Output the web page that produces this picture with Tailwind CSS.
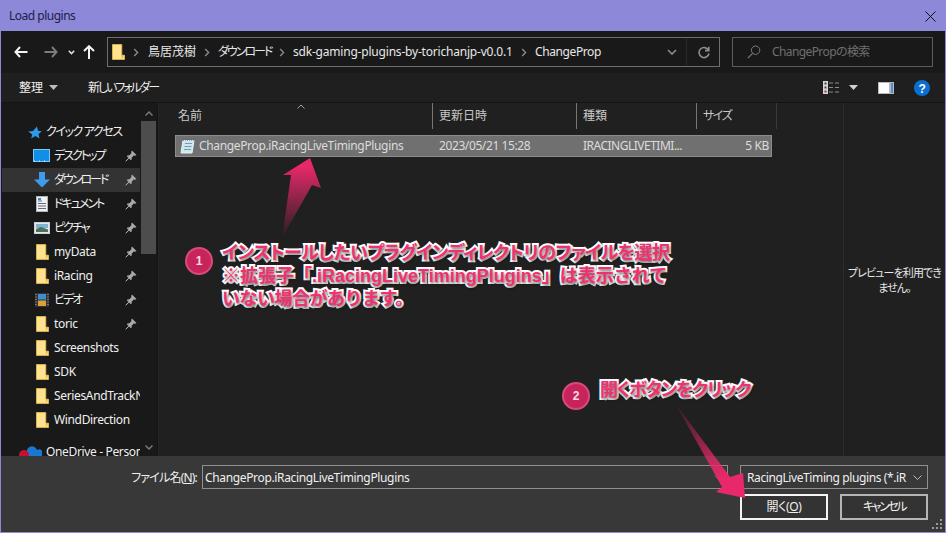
<!DOCTYPE html>
<html lang="ja">
<head>
  <meta charset="UTF-8" />
  <title>Load plugins</title>
  <script src="https://cdn.jsdelivr.net/npm/@tailwindcss/browser@4"></script>
</head>
<body class="bg-[#8e88d8]">
  <!-- shared icons -->
  <svg class="hidden">
    <symbol id="folder" viewBox="0 0 14 17">
      <path d="M0.5 0.5H10.5V12H13.5V16.5H0.5Z" fill="#ffe391" stroke="#e3b94f"/>
      <path d="M10.5 12H13.5L10.5 16.5Z" fill="#e8bf57"/>
    </symbol>
    <symbol id="pin" viewBox="0 0 12 12">
      <path d="M7 0.5L11.5 5L10 5.8L8.8 5.6L6.8 7.6L6.6 9.8L5.6 10L2 6.4L2.2 5.4L4.4 5.2L6.4 3.2L6.2 2Z" fill="#a9a9a9"/>
      <path d="M3.6 8.2L0.8 11.2L3.8 8.4Z" stroke="#a9a9a9" fill="none"/>
    </symbol>
    <symbol id="crumb" viewBox="0 0 6 9">
      <path d="M1.2 1L4.6 4.5L1.2 8" fill="none" stroke="#8a8a8a" stroke-width="1.4"/>
    </symbol>
  </svg>

  <div class="relative w-[946px] h-[533px] overflow-hidden flex flex-col px-px pb-px bg-[#8e88d8] font-['Noto_Sans','Noto_Sans_CJK_JP',sans-serif] text-xs tracking-[-0.35px] text-[#f0f0f0] [font-feature-settings:'palt']">

    <!-- title bar -->
    <div class="h-[30px] mt-px shrink-0 flex items-center justify-between pl-[8px] pr-[9px] text-[#20204a]">
      <span class="text-xs tracking-[-0.5px]">Load plugins</span>
      <svg width="11" height="11" viewBox="0 0 11 11"><path d="M0.5 0.5L10.5 10.5M10.5 0.5L0.5 10.5" stroke="#111" stroke-width="1"/></svg>
    </div>

    <!-- nav bar -->
    <div class="h-[42px] shrink-0 bg-[#191919] flex items-center">
      <div class="w-[106px] shrink-0 flex items-center">
        <svg class="ml-[13px]" width="14" height="12" viewBox="0 0 14 12"><path d="M6 1L1.5 6L6 11M1.5 6H13.5" fill="none" stroke="#f4f4f4" stroke-width="2"/></svg>
        <svg class="ml-[16px]" width="14" height="12" viewBox="0 0 14 12"><path d="M8 1L12.5 6L8 11M12.5 6H0.5" fill="none" stroke="#7c7c7c" stroke-width="2"/></svg>
        <svg class="ml-[10px]" width="7" height="5" viewBox="0 0 7 5"><path d="M0.8 0.8L3.5 3.6L6.2 0.8" fill="none" stroke="#e0e0e0" stroke-width="1.5"/></svg>
        <svg class="ml-[8px]" width="12" height="14" viewBox="0 0 12 14"><path d="M1 6L6 1.2L11 6M6 1.2V14" fill="none" stroke="#f4f4f4" stroke-width="2"/></svg>
      </div>
      <div class="w-[613px] h-[30px] shrink-0 border border-[#6e6e6e] flex items-center text-[#e8e8e8]">
        <svg class="ml-[4px]" width="13" height="16"><use href="#folder"/></svg>
        <svg class="ml-[8px]" width="6" height="9"><use href="#crumb"/></svg>
        <span class="ml-[9px] w-[56px] tracking-normal">鳥居茂樹</span>
        <svg width="6" height="9"><use href="#crumb"/></svg>
        <span class="ml-[8px] w-[61px] whitespace-nowrap tracking-[-2px]">ダウンロード</span>
        <svg width="6" height="9"><use href="#crumb"/></svg>
        <span class="ml-[8px] w-[228px] whitespace-nowrap tracking-[-0.2px]">sdk-gaming-plugins-by-torichanjp-v0.0.1</span>
        <svg width="6" height="9"><use href="#crumb"/></svg>
        <span class="ml-[8px] tracking-[-0.4px]">ChangeProp</span>
        <svg class="ml-auto" width="10" height="6" viewBox="0 0 10 6"><path d="M1 1L5 5L9 1" fill="none" stroke="#8d8d8d" stroke-width="1.6"/></svg>
        <div class="ml-[9px] h-full w-px bg-[#2a2a2a]"></div>
        <svg class="ml-[11px] mr-[9px]" width="12" height="13" viewBox="0 0 12 13"><path d="M10.5 4.2A5 5 0 1 0 11 7.5M10.8 0.8V4.6H7" fill="none" stroke="#8d8d8d" stroke-width="1.6"/></svg>
      </div>
      <div class="ml-[12px] w-[201px] h-[30px] shrink-0 border border-[#5c5c5c] flex items-center text-[#6f6f6f]">
        <svg class="ml-[14px]" width="14" height="14" viewBox="0 0 14 14"><circle cx="8.6" cy="5.2" r="4.2" fill="none" stroke="#7a7a7a"/><path d="M5.6 8.4L0.8 13.2" stroke="#7a7a7a" stroke-width="1.2"/></svg>
        <span class="ml-[11px] tracking-[-0.6px]">ChangePropの検索</span>
      </div>
    </div>

    <!-- toolbar -->
    <div class="h-[30px] shrink-0 bg-[#1f1f1f] border-b border-[#141414] flex items-center">
      <span class="ml-[18px] w-[26px] tracking-normal">整理</span>
      <svg class="ml-[4px]" width="9" height="5" viewBox="0 0 9 5"><path d="M0 0H9L4.5 5Z" fill="#bdbdbd"/></svg>
      <span class="ml-[30px] whitespace-nowrap tracking-[-2.1px]">新しいフォルダー</span>
      <div class="ml-auto flex items-center pr-[15px]">
        <svg width="17" height="13" viewBox="0 0 17 13">
          <rect width="5" height="13" fill="#d6d6d6"/>
          <rect x="1.5" y="1.5" width="2" height="2" fill="#444"/><rect x="1.5" y="5.5" width="2" height="2" fill="#444"/><rect x="1.5" y="9.5" width="2" height="2" fill="#a33"/>
          <path d="M6 2H10M12 2H16M6 6.5H10M12 6.5H16M6 11H10M12 11H16" stroke="#8c8c8c"/>
        </svg>
        <svg class="ml-[9px]" width="9" height="5" viewBox="0 0 9 5"><path d="M0 0H9L4.5 5Z" fill="#d0d0d0"/></svg>
        <svg class="ml-[20px]" width="16" height="12" viewBox="0 0 16 12"><rect width="16" height="12" fill="#b8b8b8"/><rect x="1" y="1" width="10" height="10" fill="#ffffff"/><rect x="13" y="1" width="2" height="10" fill="#4a90d9"/></svg>
        <svg class="ml-[20px]" width="16" height="16" viewBox="0 0 16 16"><circle cx="8" cy="8" r="8" fill="#0a6fd0"/><text x="8" y="12.5" text-anchor="middle" font-family="Liberation Sans" font-weight="700" font-size="12" fill="#fff">?</text></svg>
      </div>
    </div>

    <!-- body -->
    <div class="flex-1 min-h-0 flex">
      <!-- sidebar -->
      <div class="relative w-[157px] shrink-0 bg-[#191919] overflow-hidden pt-[17px] border-r border-[#141414]">
        <div class="w-[139px]">
          <div class="h-6 flex items-center">
            <svg class="ml-[27px]" width="14" height="13" viewBox="0 0 14 13"><path d="M9 0.5L10 4.8L13.8 5.2L10.6 8L11.4 12.5L7.4 10L3.2 12.5L4.2 8.4L0.2 5.6L5 5Z" fill="#2b9ae8"/></svg>
            <span class="ml-[4px] whitespace-nowrap tracking-[-1.4px]">クイック アクセス</span>
          </div>
          <div class="h-6 flex items-center">
            <svg class="ml-[32px]" width="17" height="14" viewBox="0 0 17 14"><rect x="0.5" y="0.5" width="16" height="12" fill="#0f8fe6" stroke="#7cc7f5"/><path d="M1 12H16" stroke="#d9efff" stroke-dasharray="1 4"/></svg>
            <span class="ml-[4px] flex-1 whitespace-nowrap tracking-[-2px]">デスクトップ</span>
            <svg class="mr-[3px]" width="12" height="12"><use href="#pin"/></svg>
          </div>
          <div class="h-6 flex items-center bg-[#333333] ml-[1px]">
            <svg class="ml-[32px]" width="16" height="16" viewBox="0 0 16 16"><path d="M5 0H11V7.5H16L8 15.5L0 7.5H5Z" fill="#3d9ceb"/></svg>
            <span class="ml-[4px] flex-1 whitespace-nowrap tracking-[-2px]">ダウンロード</span>
            <svg class="mr-[3px]" width="12" height="12"><use href="#pin"/></svg>
          </div>
          <div class="h-6 flex items-center">
            <svg class="ml-[35px]" width="12" height="16" viewBox="0 0 12 16"><rect x="0.5" y="0.5" width="11" height="15" fill="#f2f2f2" stroke="#b5b5b5"/><path d="M2 5H6M2 7.5H10M2 10H10M2 12.5H10" stroke="#5b6f8a"/><rect x="2" y="2" width="3" height="2" fill="#3b87cc"/></svg>
            <span class="ml-[6px] flex-1 whitespace-nowrap tracking-[-2px]">ドキュメント</span>
            <svg class="mr-[3px]" width="12" height="12"><use href="#pin"/></svg>
          </div>
          <div class="h-6 flex items-center">
            <svg class="ml-[33px]" width="16" height="12" viewBox="0 0 16 12"><rect x="0.5" y="0.5" width="15" height="11" fill="#dfe9ef" stroke="#cfcfcf"/><rect x="2" y="2" width="12" height="4" fill="#7fb2cc"/><path d="M2 7L7 5L14 7.5V10H2Z" fill="#4d6f5e"/></svg>
            <span class="ml-[4px] flex-1 whitespace-nowrap tracking-[-2px]">ピクチャ</span>
            <svg class="mr-[3px]" width="12" height="12"><use href="#pin"/></svg>
          </div>
          <div class="h-6 flex items-center">
            <svg class="ml-[35px]" width="13" height="16"><use href="#folder"/></svg>
            <span class="ml-[5px] flex-1">myData</span>
            <svg class="mr-[3px]" width="12" height="12"><use href="#pin"/></svg>
          </div>
          <div class="h-6 flex items-center">
            <svg class="ml-[35px]" width="13" height="16"><use href="#folder"/></svg>
            <span class="ml-[5px] flex-1">iRacing</span>
            <svg class="mr-[3px]" width="12" height="12"><use href="#pin"/></svg>
          </div>
          <div class="h-6 flex items-center">
            <svg class="ml-[34px]" width="14" height="14" viewBox="0 0 14 14"><rect width="14" height="14" fill="#333"/><rect x="3" y="1" width="8" height="5.5" fill="#3f8fd0"/><rect x="3" y="7.5" width="8" height="5.5" fill="#d9a13c"/><path d="M1 1V13M13 1V13" stroke="#bbb" stroke-dasharray="1 1.5"/></svg>
            <span class="ml-[5px] flex-1 whitespace-nowrap tracking-[-2px]">ビデオ</span>
            <svg class="mr-[3px]" width="12" height="12"><use href="#pin"/></svg>
          </div>
          <div class="h-6 flex items-center">
            <svg class="ml-[35px]" width="13" height="16"><use href="#folder"/></svg>
            <span class="ml-[5px] flex-1">toric</span>
            <svg class="mr-[3px]" width="12" height="12"><use href="#pin"/></svg>
          </div>
          <div class="h-6 flex items-center">
            <svg class="ml-[35px]" width="13" height="16"><use href="#folder"/></svg>
            <span class="ml-[5px]">Screenshots</span>
          </div>
          <div class="h-6 flex items-center">
            <svg class="ml-[35px]" width="13" height="16"><use href="#folder"/></svg>
            <span class="ml-[5px]">SDK</span>
          </div>
          <div class="h-6 flex items-center">
            <svg class="ml-[35px] shrink-0" width="13" height="16"><use href="#folder"/></svg>
            <span class="ml-[5px] w-[86px] overflow-hidden whitespace-nowrap">SeriesAndTrackName</span>
          </div>
          <div class="h-6 flex items-center">
            <svg class="ml-[35px]" width="13" height="16"><use href="#folder"/></svg>
            <span class="ml-[5px]">WindDirection</span>
          </div>
          <div class="h-6 mt-2 flex items-center">
            <svg class="ml-[18px] shrink-0" width="23" height="14" viewBox="0 0 23 14"><path d="M8 8A5 5 0 0 1 18 5A4 4 0 0 1 22 12H8Z" fill="#1a78d0"/><circle cx="5" cy="10" r="5" fill="#c8102e"/></svg>
            <span class="ml-[4px] w-[94px] overflow-hidden whitespace-nowrap">OneDrive - Personal</span>
          </div>
        </div>
        <!-- scrollbar -->
        <div class="absolute top-0 bottom-0 left-[140px] w-[16px] bg-[#191919]">
          <svg class="absolute left-[4px] top-[8px]" width="8" height="5" viewBox="0 0 8 5"><path d="M0.5 4.5L4 1L7.5 4.5" fill="none" stroke="#777" stroke-width="1.5"/></svg>
          <div class="absolute left-0 top-[18px] w-[15px] h-[133px] bg-[#4d4d4d]"></div>
          <svg class="absolute left-[4px] top-[342px]" width="8" height="5" viewBox="0 0 8 5"><path d="M0.5 0.5L4 4L7.5 0.5" fill="none" stroke="#777" stroke-width="1.5"/></svg>
        </div>
      </div>

      <!-- file list -->
      <div class="w-[685px] shrink-0 bg-[#202020] border-l border-[#262626] text-[#c8c8c8]">
        <div class="flex h-[26px] relative">
          <svg class="absolute left-[138px] top-[1px]" width="8" height="5" viewBox="0 0 8 5"><path d="M0.5 4.5L4 1L7.5 4.5" fill="none" stroke="#a0a0a0"/></svg>
          <div class="w-[274px] pl-[19px] flex items-center border-r border-[#777] tracking-normal">名前</div>
          <div class="w-[144px] pl-[6px] flex items-center border-r border-[#777] tracking-normal">更新日時</div>
          <div class="w-[120px] pl-[6px] flex items-center border-r border-[#777] tracking-normal">種類</div>
          <div class="w-[80px] pl-[6px] flex items-center border-r border-[#3a3a3a] tracking-[-1.5px]">サイズ</div>
        </div>
        <div class="mt-[6px] ml-[16px] w-[597px] h-[22px] bg-[#707070] border border-[#8c8c8c] flex items-center text-[#dcdcdc]">
          <svg class="ml-[4px] shrink-0" width="15" height="15" viewBox="0 0 15 15"><path d="M3 1.5H14L12 14H1Z" fill="#cfe6ee" stroke="#e8f3f7"/><path d="M3 1H14" stroke="#3f5f70" stroke-dasharray="1 1"/><path d="M5 4.5H12M4.5 7.5H11.5M4 10.5H11" stroke="#6f9fb3"/></svg>
          <span class="ml-[4px] w-[240px] whitespace-nowrap">ChangeProp.iRacingLiveTimingPlugins</span>
          <span class="w-[144px] whitespace-nowrap tracking-[-0.4px]">2023/05/21 15:28</span>
          <span class="w-[120px] whitespace-nowrap tracking-[-0.5px]">IRACINGLIVETIMI...</span>
          <span class="flex-1 text-right pr-[2px]">5 KB</span>
        </div>
      </div>

      <!-- preview pane -->
      <div class="flex-1 bg-[#202020] border-l border-[#2c2c2c] flex items-center justify-center text-center text-[11px] leading-[15px] text-[#e8e8e8] tracking-[-0.9px] whitespace-nowrap">
        プレビューを利用でき<br />ません。
      </div>
    </div>

    <!-- bottom panel -->
    <div class="relative h-[76px] shrink-0 bg-[#383838] pt-[9px] pr-[17px]">
      <div class="flex items-center h-[24px]">
        <span class="w-[196px] pt-px text-right whitespace-nowrap tracking-[-0.8px]">ファイル名(<span class="underline">N</span>):</span>
        <div class="ml-[5px] w-[526px] h-[24px] border border-[#8f8f8f] flex items-center justify-between pl-[2px] pr-[5px]">
          <span class="pt-px">ChangeProp.iRacingLiveTimingPlugins</span>
          <svg width="8" height="5" viewBox="0 0 8 5"><path d="M0.5 0.5L4 4L7.5 0.5" fill="none" stroke="#5f5f5f"/></svg>
        </div>
        <div class="ml-[12px] w-[188px] h-[24px] border border-[#8f8f8f] flex items-center justify-between pl-[6px] pr-[5px]">
          <span class="pt-px whitespace-nowrap tracking-[-0.4px]">RacingLiveTiming plugins (*.iR</span>
          <svg class="shrink-0" width="9" height="5" viewBox="0 0 9 5"><path d="M0.5 0.5L4.5 4.5L8.5 0.5" fill="none" stroke="#c0c0c0"/></svg>
        </div>
      </div>
      <div class="mt-[5px] flex justify-end gap-[12px]">
        <div class="w-[88px] h-[26px] bg-[#333333] border-2 border-[#f4f4f4] flex items-center justify-center">開く(<span class="underline">O</span>)</div>
        <div class="w-[88px] h-[26px] bg-[#333333] border-2 border-[#b5b5b5] flex items-center justify-center tracking-[-2.4px]">キャンセル</div>
      </div>
      <svg class="absolute right-[3px] bottom-[3px]" width="10" height="10" viewBox="0 0 10 10"><path d="M8 0h2v2H8zM4 4h2v2H4zM8 4h2v2H8zM0 8h2v2H0zM4 8h2v2H4zM8 8h2v2H8z" fill="#9a9a9a"/></svg>
    </div>

    <!-- annotation arrows -->
    <svg class="absolute left-0 top-0 pointer-events-none" width="946" height="533" viewBox="0 0 946 533">
      <defs>
        <linearGradient id="up" x1="0" y1="158" x2="0" y2="238" gradientUnits="userSpaceOnUse">
          <stop offset="0.1" stop-color="#e8286a"/><stop offset="1" stop-color="#e8286a" stop-opacity="0"/>
        </linearGradient>
        <linearGradient id="down" x1="675" y1="403" x2="745" y2="498" gradientUnits="userSpaceOnUse">
          <stop offset="0" stop-color="#e8286a" stop-opacity="0.05"/><stop offset="0.75" stop-color="#e8286a"/>
        </linearGradient>
      </defs>
      <path d="M310 158L283 175L291 175L282 238L312 185L321 188Z" fill="url(#up)"/>
      <path d="M675 403L722 487L716 492L745 498L743 473L730 477Z" fill="url(#down)"/>
    </svg>

    <!-- annotation 1 -->
    <div class="absolute left-[185px] top-[247px] w-[28px] h-[28px] rounded-full bg-[#c8245c] border-2 border-[#d94a7c] flex items-center justify-center text-[12px] font-bold text-[#f6dbe4] font-['Liberation_Sans',sans-serif]">1</div>
    <div class="absolute left-[222px] top-[242px] w-[470px] font-['Liberation_Sans','Noto_Sans_CJK_JP',sans-serif] text-[18px] leading-[23px] font-bold text-[#f0306f] [-webkit-text-stroke:4px_#ffffff] [paint-order:stroke_fill] [text-shadow:1px_2px_3px_rgba(0,0,0,0.6)] whitespace-nowrap">
      <div class="tracking-[-0.5px]">インストールしたいプラグインディレクトリのファイルを選択</div>
      <div class="tracking-normal [font-feature-settings:normal]">※拡張子「.iRacingLiveTimingPlugins」は表示されて</div>
      <div class="tracking-[-0.5px] [font-feature-settings:normal]">いない場合があります。</div>
    </div>

    <!-- annotation 2 -->
    <div class="absolute left-[562px] top-[382px] w-[28px] h-[28px] rounded-full bg-[#c8245c] border-2 border-[#d94a7c] flex items-center justify-center text-[12px] font-bold text-[#f6dbe4] font-['Liberation_Sans',sans-serif]">2</div>
    <div class="absolute left-[600px] top-[379px] font-['Liberation_Sans','Noto_Sans_CJK_JP',sans-serif] text-[18px] leading-[23px] font-bold text-[#f0306f] [-webkit-text-stroke:4px_#ffffff] [paint-order:stroke_fill] [text-shadow:1px_2px_3px_rgba(0,0,0,0.6)] tracking-[-1.2px] whitespace-nowrap">開くボタンをクリック</div>
  </div>
</body>
</html>
